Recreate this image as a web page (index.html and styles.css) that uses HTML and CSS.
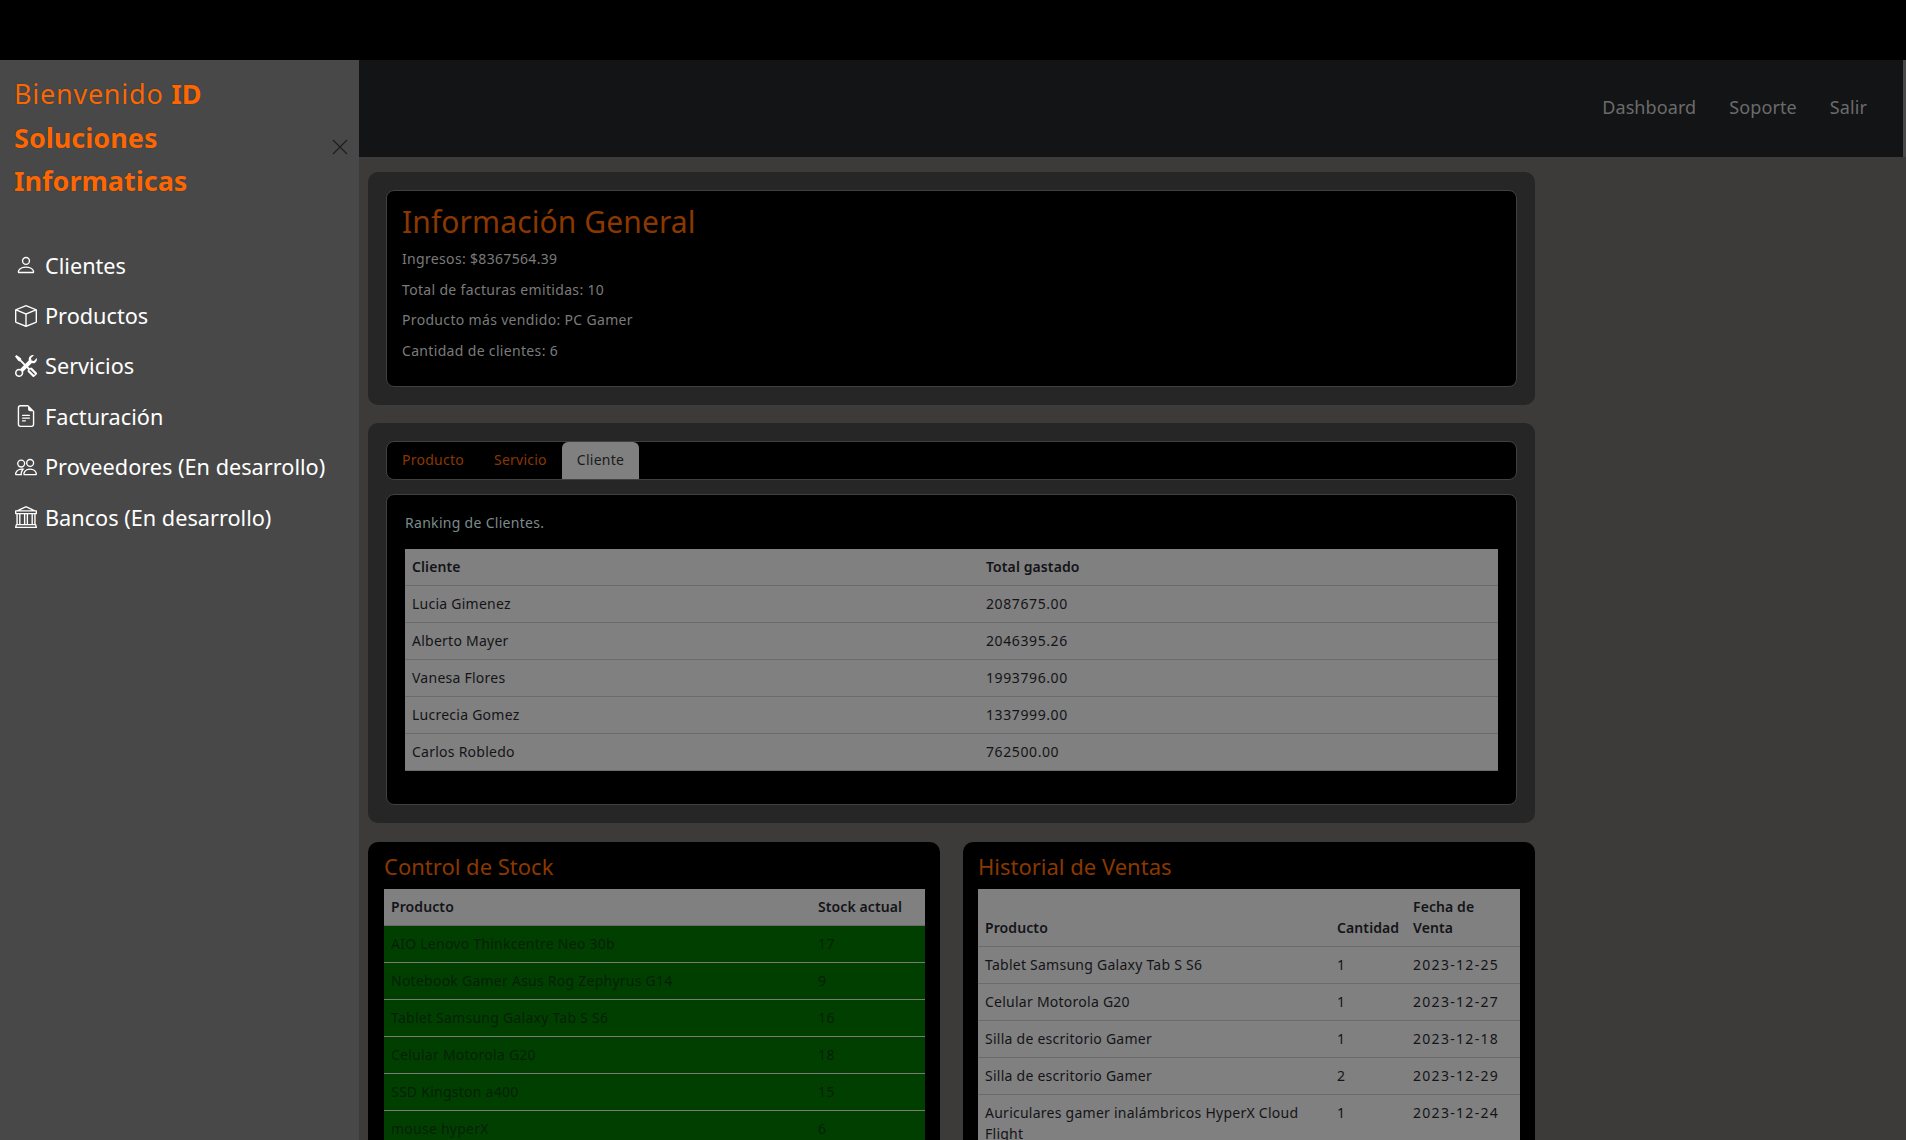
FILE: index.html
```html
<!DOCTYPE html>
<html lang="es">
<head>
    <meta charset="UTF-8">
    <title>Dashboard</title>
    <link rel="stylesheet" href="styles.css">
</head>
<body>
    <div class="top-bar"></div>
    <div class="layout">
        <aside class="sidebar">
            <div class="sidebar-head">
                <h2 class="brand">Bienvenido <b>ID Soluciones Informaticas</b></h2>
                <button class="close-btn" aria-label="Cerrar">
                    <svg viewBox="0 0 16 16" width="16" height="16"><path d="M1 1l14 14M15 1L1 15" stroke="currentColor" stroke-width="1.2" fill="none"/></svg>
                </button>
            </div>
            <nav class="side-nav">
                <a href="#">
                    <svg class="side-icon" viewBox="0 0 16 16"><path d="M8 8a3 3 0 1 0 0-6 3 3 0 0 0 0 6Zm2-3a2 2 0 1 1-4 0 2 2 0 0 1 4 0Zm4 8c0 1-1 1-1 1H3s-1 0-1-1 1-4 6-4 6 3 6 4Zm-1-.004c-.001-.246-.154-.986-.832-1.664C11.516 10.68 10.289 10 8 10c-2.29 0-3.516.68-4.168 1.332-.678.678-.83 1.418-.832 1.664h10Z"/></svg>
                    Clientes
                </a>
                <a href="#">
                    <svg class="side-icon" viewBox="0 0 16 16"><path d="M8.186 1.113a.5.5 0 0 0-.372 0L1.846 3.5 8 5.961 14.154 3.5 8.186 1.113zM15 4.239l-6.5 2.6v7.922l6.5-2.6V4.24zM7.5 14.762V6.838L1 4.239v7.925l6.5 2.6zM7.443.184a1.5 1.5 0 0 1 1.114 0l7.129 2.852A.5.5 0 0 1 16 3.5v8.662a1 1 0 0 1-.629.928l-7.185 2.874a.5.5 0 0 1-.372 0L.63 13.09a1 1 0 0 1-.63-.928V3.5a.5.5 0 0 1 .314-.464L7.443.184z"/></svg>
                    Productos
                </a>
                <a href="#">
                    <svg class="side-icon" viewBox="0 0 16 16"><path d="M1 0 0 1l2.2 3.081a1 1 0 0 0 .815.419h.07a1 1 0 0 1 .708.293l2.675 2.675-2.617 2.654A3.003 3.003 0 0 0 0 13a3 3 0 1 0 5.878-.851l2.654-2.617.968.968-.305.914a1 1 0 0 0 .242 1.023l3.27 3.27a.997.997 0 0 0 1.414 0l1.586-1.586a.997.997 0 0 0 0-1.414l-3.27-3.27a1 1 0 0 0-1.023-.242L10.5 9.5l-.96-.96 2.68-2.643A3.005 3.005 0 0 0 16 3c0-.269-.035-.53-.102-.777l-2.14 2.141L12 4l-.364-1.757L13.777.102a3 3 0 0 0-3.675 3.68L7.462 6.46 4.793 3.793a1 1 0 0 1-.293-.707v-.071a1 1 0 0 0-.419-.814L1 0Zm9.646 10.646a.5.5 0 0 1 .708 0l2.914 2.915a.5.5 0 0 1-.707.707l-2.915-2.914a.5.5 0 0 1 0-.708ZM3 11l.471.242.529.026.287.445.445.287.026.529L5 13l-.242.471-.026.529-.445.287-.287.445-.529.026L3 15l-.471-.242L2 14.732l-.287-.445L1.268 14l-.026-.529L1 13l.242-.471.026-.529.445-.287.287-.445.529-.026L3 11Z"/></svg>
                    Servicios
                </a>
                <a href="#">
                    <svg class="side-icon" viewBox="0 0 16 16"><path d="M5.5 7a.5.5 0 0 0 0 1h5a.5.5 0 0 0 0-1h-5zM5 9.5a.5.5 0 0 1 .5-.5h5a.5.5 0 0 1 0 1h-5a.5.5 0 0 1-.5-.5zm0 2a.5.5 0 0 1 .5-.5h2a.5.5 0 0 1 0 1h-2a.5.5 0 0 1-.5-.5z"/><path d="M9.5 0H4a2 2 0 0 0-2 2v12a2 2 0 0 0 2 2h8a2 2 0 0 0 2-2V4.5L9.5 0zm0 1v2A1.5 1.5 0 0 0 11 4.5h2V14a1 1 0 0 1-1 1H4a1 1 0 0 1-1-1V2a1 1 0 0 1 1-1h5.5z"/></svg>
                    Facturación
                </a>
                <a href="#">
                    <svg class="side-icon" viewBox="0 0 16 16"><path d="M15 14s1 0 1-1-1-4-5-4-5 3-5 4 1 1 1 1h8Zm-7.978-1A.261.261 0 0 1 7 12.996c.001-.264.167-1.03.76-1.72C8.312 10.629 9.282 10 11 10c1.717 0 2.687.63 3.24 1.276.593.69.758 1.457.76 1.72l-.008.002a.274.274 0 0 1-.014.002H7.022ZM11 7a2 2 0 1 0 0-4 2 2 0 0 0 0 4Zm3-2a3 3 0 1 1-6 0 3 3 0 0 1 6 0ZM6.936 9.28a5.88 5.88 0 0 0-1.23-.247A7.35 7.35 0 0 0 5 9c-4 0-5 3-5 4 0 .667.333 1 1 1h4.216A2.238 2.238 0 0 1 5 13c0-1.01.377-2.042 1.09-2.904.243-.294.526-.569.846-.816ZM4.92 10A5.493 5.493 0 0 0 4 13H1c0-.26.164-1.03.76-1.724.545-.636 1.492-1.256 3.16-1.275ZM1.5 5.5a3 3 0 1 1 6 0 3 3 0 0 1-6 0Zm3-2a2 2 0 1 0 0 4 2 2 0 0 0 0-4Z"/></svg>
                    Proveedores (En desarrollo)
                </a>
                <a href="#">
                    <svg class="side-icon" viewBox="0 0 16 16"><path d="m8 0 6.61 3h.89a.5.5 0 0 1 .5.5v2a.5.5 0 0 1-.5.5H15v7a.5.5 0 0 1 .485.38l.5 2a.498.498 0 0 1-.485.62H.5a.498.498 0 0 1-.485-.62l.5-2A.501.501 0 0 1 1 13V6H.5a.5.5 0 0 1-.5-.5v-2A.5.5 0 0 1 .5 3h.89L8 0ZM3.777 3h8.447L8 1 3.777 3ZM2 6v7h1V6H2Zm2 0v7h2.5V6H4Zm3.5 0v7h1V6h-1Zm2 0v7H12V6H9.5ZM13 6v7h1V6h-1Zm2-1V4H1v1h14Zm-.39 9H1.39l-.25 1h13.72l-.25-1Z"/></svg>
                    Bancos (En desarrollo)
                </a>
            </nav>
        </aside>

        <main class="main">
            <header class="navbar">
                <a href="#">Dashboard</a>
                <a href="#">Soporte</a>
                <a href="#">Salir</a>
            </header>

            <div class="content">
                <section class="panel">
                    <div class="card info-card">
                        <h1>Información General</h1>
                        <p>Ingresos: $8367564.39</p>
                        <p>Total de facturas emitidas: 10</p>
                        <p>Producto más vendido: PC Gamer</p>
                        <p>Cantidad de clientes: 6</p>
                    </div>
                </section>

                <section class="panel ranking-panel">
                    <ul class="tabs card">
                        <li><a href="#">Producto</a></li>
                        <li><a href="#">Servicio</a></li>
                        <li><a href="#" class="active">Cliente</a></li>
                    </ul>
                    <div class="card tab-pane">
                        <p class="pane-lead">Ranking de Clientes.</p>
                        <table class="table ranking">
                            <thead>
                                <tr><th>Cliente</th><th>Total gastado</th></tr>
                            </thead>
                            <tbody>
                                <tr><td>Lucia Gimenez</td><td class="num">2087675.00</td></tr>
                                <tr><td>Alberto Mayer</td><td class="num">2046395.26</td></tr>
                                <tr><td>Vanesa Flores</td><td class="num">1993796.00</td></tr>
                                <tr><td>Lucrecia Gomez</td><td class="num">1337999.00</td></tr>
                                <tr><td>Carlos Robledo</td><td class="num">762500.00</td></tr>
                            </tbody>
                        </table>
                    </div>
                </section>

                <div class="bottom-row">
                    <section class="black-card stock-card">
                        <h3>Control de Stock</h3>
                        <table class="table stock">
                            <thead>
                                <tr><th>Producto</th><th>Stock actual</th></tr>
                            </thead>
                            <tbody>
                                <tr><td>AIO Lenovo Thinkcentre Neo 30b</td><td class="num">17</td></tr>
                                <tr><td>Notebook Gamer Asus Rog Zephyrus G14</td><td class="num">9</td></tr>
                                <tr><td>Tablet Samsung Galaxy Tab S S6</td><td class="num">16</td></tr>
                                <tr><td>Celular Motorola G20</td><td class="num">18</td></tr>
                                <tr><td>SSD Kingston a400</td><td class="num">15</td></tr>
                                <tr><td>mouse hyperX</td><td class="num">6</td></tr>
                            </tbody>
                        </table>
                    </section>

                    <section class="black-card">
                        <h3>Historial de Ventas</h3>
                        <table class="table sales">
                            <thead>
                                <tr><th>Producto</th><th>Cantidad</th><th>Fecha de Venta</th></tr>
                            </thead>
                            <tbody>
                                <tr><td>Tablet Samsung Galaxy Tab S S6</td><td class="num">1</td><td class="date">2023-12-25</td></tr>
                                <tr><td>Celular Motorola G20</td><td class="num">1</td><td class="date">2023-12-27</td></tr>
                                <tr><td>Silla de escritorio Gamer</td><td class="num">1</td><td class="date">2023-12-18</td></tr>
                                <tr><td>Silla de escritorio Gamer</td><td class="num">2</td><td class="date">2023-12-29</td></tr>
                                <tr><td>Auriculares gamer inalámbricos HyperX Cloud Flight</td><td class="num">1</td><td class="date">2023-12-24</td></tr>
                            </tbody>
                        </table>
                    </section>
                </div>
            </div>
        </main>
    </div>
</body>
</html>
```

FILE: styles.css
```css
* {
    box-sizing: border-box;
}

html, body {
    height: 100%;
}

body {
    margin: 0;
    background-color: #000;
    font-family: "Noto Sans", "Open Sans", sans-serif;
    font-size: 14px;
    line-height: 21px;
    overflow: hidden;
}

a {
    text-decoration: none;
}

.top-bar {
    height: 60px;
    background-color: #000;
}

.layout {
    display: flex;
    height: 1080px;
}

/* sidebar */
.sidebar {
    width: 359px;
    flex-shrink: 0;
    background-color: #484848;
}

.sidebar-head {
    display: flex;
    padding: 12px 9px 0 14px;
    height: 180px;
}

.brand {
    margin: 0;
    width: 290px;
    flex-shrink: 0;
    color: #ff6600;
    font-size: 27px;
    font-weight: 400;
    line-height: 43.5px;
    letter-spacing: 0.75px;
    text-shadow: 0 0 1px #0b3a4a;
}

.brand b {
    font-weight: 700;
    letter-spacing: 0;
}

.close-btn {
    margin: 67px 0 0 28px;
    padding: 0;
    width: 16px;
    height: 16px;
    border: none;
    background: none;
    color: #1d1d1d;
}

.side-nav {
    display: flex;
    flex-direction: column;
}

.side-nav a {
    display: flex;
    align-items: center;
    gap: 8px;
    height: 50.4px;
    padding-left: 15px;
    color: #fff;
    font-size: 21.7px;
}

.side-icon {
    width: 22px;
    height: 22px;
    fill: currentColor;
    flex-shrink: 0;
}

/* main */
.main {
    flex: 1;
    min-width: 0;
    background-color: #3c3b39;
}

.navbar {
    display: flex;
    justify-content: flex-end;
    align-items: center;
    gap: 33px;
    height: 97px;
    padding: 0 36px 2px 0;
    margin-bottom: 15px;
    background-color: #131416;
    border-right: 3px solid #484848;
}

.navbar a {
    color: #6b6b6b;
    font-size: 18px;
    letter-spacing: 0.1px;
}

.content {
    width: 1167px;
    margin-left: 9px;
}

.panel {
    padding: 18px;
    margin-bottom: 18px;
    border-radius: 10px;
    background-color: #262626;
}

.ranking-panel {
    margin-bottom: 19px;
}

.card {
    background-color: #000;
    border: 1px solid #404040;
    border-radius: 8px;
}

.info-card {
    padding: 11px 15px 14px;
    height: 197px;
}

.info-card h1 {
    margin: 0 0 6px;
    color: #8a3800;
    font-size: 30px;
    font-weight: 400;
    line-height: 40px;
    letter-spacing: 0.1px;
}

.info-card p {
    margin: 0 0 9.7px;
    color: #7b7b7b;
    letter-spacing: 0.33px;
}

/* tabs */
.tabs {
    display: flex;
    list-style: none;
    margin: 0 0 14px;
    padding: 0;
    height: 39px;
    letter-spacing: 0.25px;
}

.tabs a {
    display: block;
    height: 37px;
    padding: 7px 15px;
    color: #8a3800;
    border-radius: 6px 6px 0 0;
}

.tabs a.active {
    background-color: #808080;
    color: #1a1a1a;
}

.tab-pane {
    padding: 17px 18px 33px;
    border-radius: 8px;
}

.pane-lead {
    margin: 0 0 16px;
    color: #7b8b8b;
    letter-spacing: 0.3px;
}

/* tables */
.table {
    width: 100%;
    border-collapse: collapse;
    table-layout: fixed;
    background-color: #808080;
    color: #141418;
    letter-spacing: 0.25px;
}

.table th {
    padding: 7px 7px 8px;
    text-align: left;
    vertical-align: bottom;
    font-weight: 600;
    letter-spacing: 0.1px;
    border-bottom: 1px solid #6b6b6b;
}

.table td {
    padding: 7px 7px 8px;
    vertical-align: top;
    border-bottom: 1px solid #6b6b6b;
}

.table .num {
    letter-spacing: 0.6px;
}

.table .date {
    letter-spacing: 1.3px;
}

.ranking th:first-child {
    width: 574px;
}

.bottom-row {
    display: grid;
    grid-template-columns: 1fr 1fr;
    gap: 23px;
}

.black-card {
    min-width: 0;
    padding: 9px 15px 15px;
    border-radius: 10px;
    background-color: #000;
}

.stock-card {
    padding-left: 16px;
}

.black-card h3 {
    margin: 0 0 7px;
    color: #8a3800;
    font-size: 22px;
    font-weight: 400;
    line-height: 31px;
}

.stock th:first-child {
    width: 427px;
}

.stock tbody td {
    background-color: #003f00;
    color: #061f08;
    border-bottom-color: #7a7a7a;
}

.sales th:first-child {
    width: 352px;
}

.sales th:nth-child(2) {
    width: 76px;
}
```
